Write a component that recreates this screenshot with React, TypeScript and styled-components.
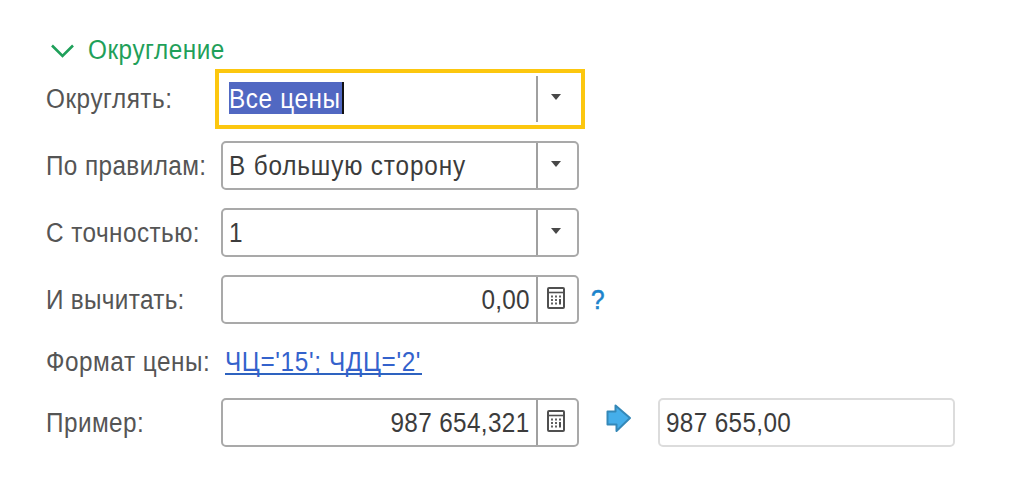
import React from "react";
import styled, { createGlobalStyle } from "styled-components";

const GlobalStyle = createGlobalStyle`
  body {
    margin: 0;
    background: #fff;
    font-family: "Liberation Sans", Arial, sans-serif;
    font-size: 27px;
    color: #3c3c3c;
  }
`;

const Form = styled.main`
  box-sizing: border-box;
  width: 1024px;
  height: 477px;
  padding: 29px 0 0 46px;
  overflow: hidden;
`;

const GroupHeader = styled.header`
  display: flex;
  align-items: center;
  height: 40px;
  color: #1fa05a;

  svg {
    flex: none;
    margin: 3px 12px 0 4px;
  }
`;

const Row = styled.div<{ $top?: number; $height?: number }>`
  display: flex;
  align-items: center;
  height: ${(p) => p.$height ?? 49}px;
  margin-top: ${(p) => p.$top ?? 18}px;
`;

const Label = styled.label`
  flex: none;
  width: 175px;
  color: #555;
`;

const Text = styled.span<{ $spacing?: number; $end?: boolean }>`
  display: inline-block;
  white-space: nowrap;
  line-height: 32px;
  letter-spacing: ${(p) => p.$spacing ?? 0.5}px;
  transform: scaleX(0.9);
  transform-origin: ${(p) => (p.$end ? "right" : "left")} center;
`;

const Title = styled(Text)`
  margin-top: 2px;
`;

const Field = styled.div<{ $focused?: boolean }>`
  box-sizing: border-box;
  flex: none;
  display: flex;
  width: ${(p) => (p.$focused ? 370 : 358)}px;
  height: ${(p) => (p.$focused ? 60 : 49)}px;
  margin-left: ${(p) => (p.$focused ? -6 : 0)}px;
  padding: ${(p) => (p.$focused ? "3px 4px 3px 4px" : "0")};
  border: ${(p) => (p.$focused ? "4px solid #fcc70f" : "2px solid #a9a9a9")};
  border-radius: ${(p) => (p.$focused ? 0 : 5)}px;
`;

const Value = styled.div<{ $end?: boolean }>`
  flex: 1;
  min-width: 0;
  display: flex;
  align-items: center;
  justify-content: ${(p) => (p.$end ? "flex-end" : "flex-start")};
  padding: 0 6px;
`;

const Selection = styled.span`
  display: flex;
  align-items: flex-end;
  box-sizing: border-box;
  width: 115px;
  height: 32px;
  margin-top: -2px;
  border-right: 2px solid #111;
  background: #5168c2;
  color: #fff;

  ${Text} {
    line-height: 30px;
  }
`;

const FieldButton = styled.span`
  flex: none;
  box-sizing: border-box;
  display: flex;
  align-items: center;
  justify-content: center;
  width: 41px;
  padding: 0 3px 4px 0;
  border-left: 2px solid #a0a0a0;
`;

const Help = styled.span`
  margin-left: 12px;
  color: #1c84cc;
  -webkit-text-stroke: 0.6px #1c84cc;
`;

const FormatLink = styled.a`
  box-sizing: border-box;
  width: 197px;
  height: 29px;
  margin: -2px 0 0 4px;
  border-bottom: 2px solid #2e63c0;
  color: #3462cc;
`;

const ArrowIcon = styled.svg`
  flex: none;
  margin: -10px 26px 0 27px;
`;

const Result = styled.div`
  box-sizing: border-box;
  display: flex;
  align-items: center;
  width: 297px;
  height: 49px;
  padding-left: 6px;
  border: 2px solid #dcdcdc;
  border-radius: 5px;
`;

const Caret = () => (
  <FieldButton>
    <svg width="12" height="8" viewBox="0 0 12 8">
      <path d="M1 1h10L6 7z" fill="#484848" />
    </svg>
  </FieldButton>
);

const dots = [
  [5, 9.5], [9, 9.5], [13, 9.5],
  [5, 13], [9, 13],
  [5, 16.5], [9, 16.5],
];

const Calculator = () => (
  <FieldButton>
    <svg width="18" height="22" viewBox="0 0 18 22">
      <rect x="1" y="1" width="16" height="20" rx="1" fill="#fff" stroke="#505050" strokeWidth="2" />
      <path d="M1 5.5h16" stroke="#505050" strokeWidth="1.6" />
      {dots.map(([x, y]) => (
        <rect key={`${x}-${y}`} x={x - 1} y={y - 1} width="2" height="2" fill="#606060" />
      ))}
      <rect x="12" y="12" width="2" height="5.5" fill="#505050" />
    </svg>
  </FieldButton>
);

export default function App() {
  return (
    <>
      <GlobalStyle />
      <Form>
        <GroupHeader>
          <svg width="26" height="16" viewBox="0 0 26 16" fill="none">
            <path d="M2 2.5L12.5 13L23 2.5" stroke="#1fa05a" strokeWidth="2.6" />
          </svg>
          <Title $spacing={0.6}>Округление</Title>
        </GroupHeader>
        <Row $top={0} $height={60}>
          <Label><Text $spacing={0.6}>Округлять:</Text></Label>
          <Field $focused>
            <Value>
              <Selection><Text $spacing={0.7}>Все цены</Text></Selection>
            </Value>
            <Caret />
          </Field>
        </Row>
        <Row $top={12}>
          <Label><Text $spacing={0.45}>По правилам:</Text></Label>
          <Field>
            <Value><Text $spacing={0.95}>В большую сторону</Text></Value>
            <Caret />
          </Field>
        </Row>
        <Row>
          <Label><Text>С точностью:</Text></Label>
          <Field>
            <Value><Text>1</Text></Value>
            <Caret />
          </Field>
        </Row>
        <Row>
          <Label><Text $spacing={0.35}>И вычитать:</Text></Label>
          <Field>
            <Value $end><Text $end $spacing={0.3}>0,00</Text></Value>
            <Calculator />
          </Field>
          <Help><Text>?</Text></Help>
        </Row>
        <Row $top={13}>
          <Label><Text $spacing={0.6}>Формат цены:</Text></Label>
          <FormatLink><Text $spacing={0.72}>ЧЦ='15'; ЧДЦ='2'</Text></FormatLink>
        </Row>
        <Row $top={12}>
          <Label><Text>Пример:</Text></Label>
          <Field>
            <Value $end><Text $end $spacing={0.4}>987 654,321</Text></Value>
            <Calculator />
          </Field>
          <ArrowIcon width="26" height="30" viewBox="0 0 26 30">
            <path d="M1.5 8.5H9.5V2.5L24 15L10.5 28V21.5H1.5z" fill="#45aeea" stroke="#3488b8" strokeWidth="2" strokeLinejoin="round" />
          </ArrowIcon>
          <Result><Text $spacing={0.4}>987 655,00</Text></Result>
        </Row>
      </Form>
    </>
  );
}
